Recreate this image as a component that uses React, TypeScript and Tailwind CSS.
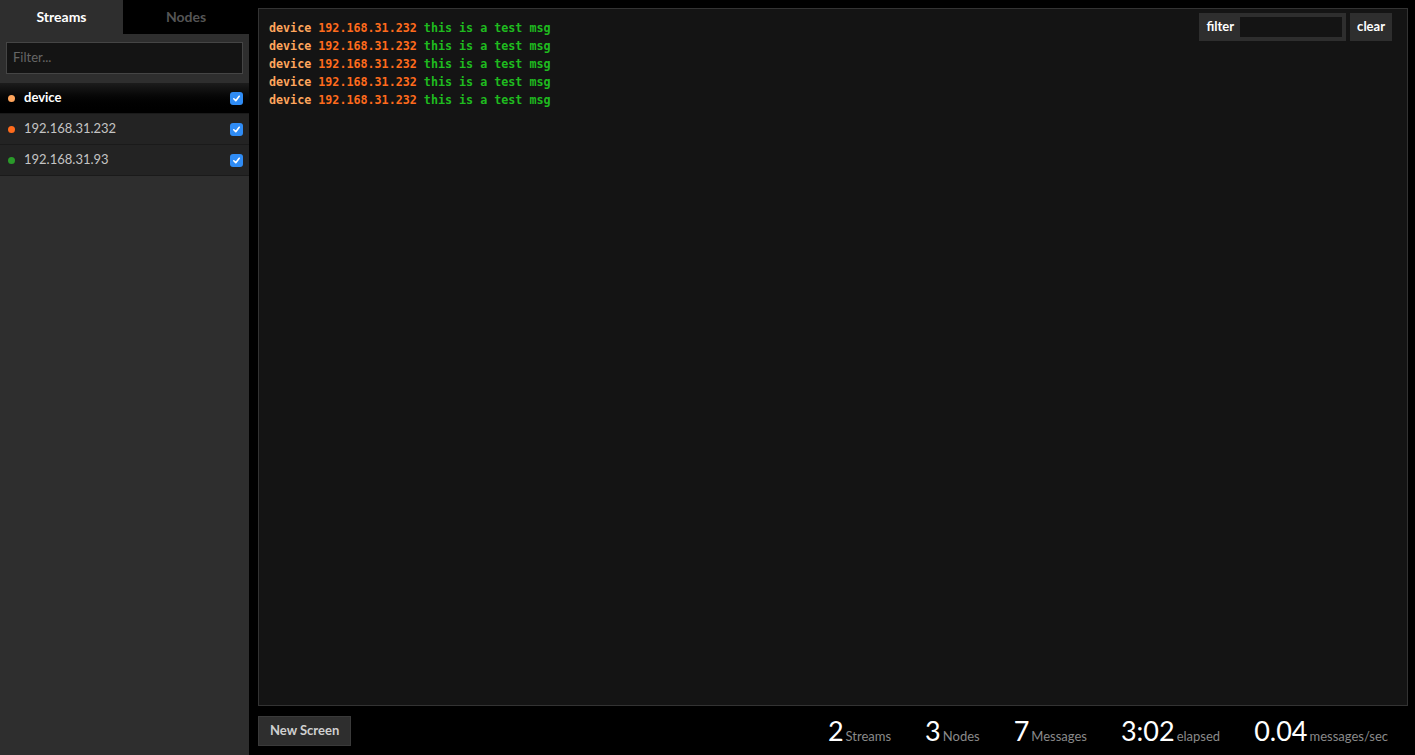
import React from "react";

const sans = { fontFamily: "Lato, 'Open Sans', sans-serif" };

function Check() {
  return (
    <div className="w-[13px] h-[13px] rounded-[3px] bg-[#2f8cf5] flex items-center justify-center">
      <svg width="9" height="9" viewBox="0 0 10 10">
        <path d="M2 5.3 L4.2 7.5 L8 2.5" stroke="white" strokeWidth="1.8" fill="none" strokeLinecap="round" strokeLinejoin="round" />
      </svg>
    </div>
  );
}

function Row({ dot, label, active }: { dot: string; label: string; active?: boolean }) {
  return (
    <div
      className={
        "h-[31px] flex items-center pl-[8px] pr-[6px] border-b border-[#1a1a1a] " +
        (active ? "bg-gradient-to-b from-[#1c1c1c] to-[#000000] text-white font-bold" : "bg-[#232323] text-[#c4c4c4]")
      }
    >
      <span className="w-[7px] h-[7px] rounded-full mr-[9px]" style={{ background: dot }} />
      <span className="text-[13px] flex-1">{label}</span>
      <Check />
    </div>
  );
}

const Line = () => (
  <div className="leading-[18px] whitespace-pre">
    <span className="text-[#ffa55c]">device</span> <span className="text-[#ff6b1c]">192.168.31.232</span>{" "}
    <span className="text-[#1fbb1f]">this is a test msg</span>
  </div>
);

function Stat({ n, l }: { n: string; l: string }) {
  return (
    <div className="flex items-baseline">
      <span className="text-[27px] text-white leading-none">{n}</span>
      <span className="text-[13px] text-[#8a8a8a] ml-[2px]">{l}</span>
    </div>
  );
}

export default function App() {
  return (
    <div className="w-[1415px] h-[755px] bg-black flex overflow-hidden" style={sans}>
      <div className="w-[249px] bg-[#2e2e2e] flex flex-col">
        <div className="flex h-[34px]">
          <div className="w-[123px] flex items-center justify-center text-white font-bold text-[14px] pb-[1px]">Streams</div>
          <div className="flex-1 bg-black flex items-center justify-center text-[#555] font-bold text-[14px] pb-[1px]">Nodes</div>
        </div>
        <div className="px-[6px] pt-[8px] pb-[9px]">
          <div className="h-[32px] bg-[#141414] border border-[#454545] flex items-center px-[6px] text-[13px] text-[#666]">
            Filter...
          </div>
        </div>
        <Row dot="#ffa55c" label="device" active />
        <Row dot="#ff6b1c" label="192.168.31.232" />
        <Row dot="#2a9a2a" label="192.168.31.93" />
      </div>
      <div className="flex-1 flex flex-col pl-[9px] pr-[7px] pt-[8px]">
        <div className="flex-1 bg-[#141414] border border-[#333] relative pt-[10px] pl-[10px] font-bold text-[11.7px]" style={{ fontFamily: "'DejaVu Sans Mono', monospace" }}>
          <Line />
          <Line />
          <Line />
          <Line />
          <Line />
          <div className="absolute top-[4px] right-[15px] flex gap-[4px]" style={sans}>
            <div className="h-[28px] bg-[#2e2e2e] flex items-center pl-[7px] pr-[4px] gap-[6px]">
              <span className="text-[13px] text-white font-bold">filter</span>
              <div className="w-[102px] h-[20px] bg-[#141414]" />
            </div>
            <div className="h-[28px] bg-[#2e2e2e] flex items-center px-[7px] text-[13px] text-white font-bold">clear</div>
          </div>
        </div>
        <div className="h-[49px] flex items-center">
          <div className="h-[30px] px-[11px] bg-[#2e2e2e] border border-[#3a3a3a] flex items-center text-[13px] font-bold text-[#d0d0d0] mt-[1px]">
            New Screen
          </div>
          <div className="flex-1" />
          <div className="flex items-baseline gap-[34px] mr-[20px] mt-[2px]">
            <Stat n="2" l="Streams" />
            <Stat n="3" l="Nodes" />
            <Stat n="7" l="Messages" />
            <Stat n="3:02" l="elapsed" />
            <Stat n="0.04" l="messages/sec" />
          </div>
        </div>
      </div>
    </div>
  );
}
